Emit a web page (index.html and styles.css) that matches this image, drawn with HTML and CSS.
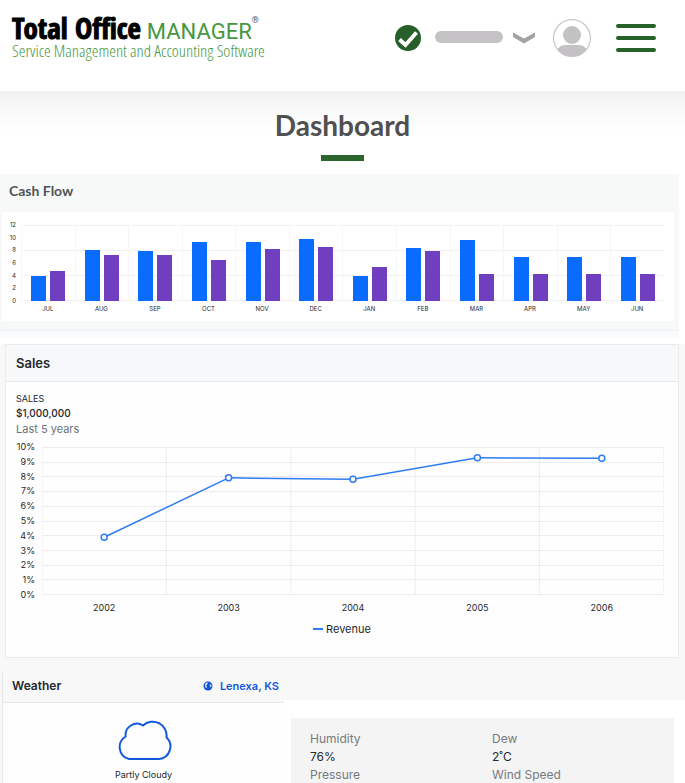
FILE: index.html
```html
<!DOCTYPE html>
<html lang="en">
<head>
<meta charset="utf-8">
<meta name="viewport" content="width=device-width, initial-scale=1">
<title>Dashboard</title>
<link rel="stylesheet" href="styles.css">
</head>
<body>
<header class="topbar">
  <a class="brand" href="#">
    <span class="brand-name"><b>Total Office</b><span class="brand-sub">MANAGER</span><sup>®</sup></span>
    <span class="tagline">Service Management and Accounting Software</span>
  </a>
  <div class="tools">
    <svg class="check" viewBox="0 0 26 26" aria-hidden="true"><circle cx="13" cy="13" r="13" fill="#265f29"/><path d="M4.500 14.500l6 5.500L21.500 7.500" fill="none" stroke="#fff" stroke-width="4"/></svg>
    <span class="pill"></span>
    <button class="icon-button" aria-label="Account menu"><svg class="chevron" viewBox="0 0 22 12"><path d="M0 .5V5l11 6.500L22 5V.5L11 6.500z" fill="#a3a3a3"/></svg></button>
    <button class="icon-button" aria-label="Profile"><svg class="avatar" viewBox="0 0 38 38"><circle cx="19" cy="19" r="18.400" fill="#fff" stroke="#c8c6c8" stroke-width="1.200"/><circle cx="19" cy="16" r="9" fill="#c3c1c3"/><path d="M4.500 30.500C7 26.500 10 26 14 26h10c4 0 7 .5 9.500 4.500A18.500 18.500 0 0 1 4.500 30.500z" fill="#c3c1c3"/></svg></button>
    <button class="icon-button" aria-label="Menu"><svg class="burger" viewBox="0 0 40 28"><path d="M2 2h36M2 14h36M2 26h36" stroke="#286229" stroke-width="4" stroke-linecap="round"/></svg></button>
  </div>
</header>
<main>
  <div class="title"><h1>Dashboard</h1></div>

  <section class="cash">
    <h2>Cash Flow</h2>
    <div class="cash-card">
      <ul class="cash-scale"><li>12</li><li>10</li><li>8</li><li>6</li><li>4</li><li>2</li><li>0</li></ul>
      <div class="cash-plot" id="cash-plot"></div>
    </div>
    <div class="cash-foot"></div>
  </section>

  <section class="sales-wrap">
    <div class="sales">
      <h2>Sales</h2>
      <div class="sales-body">
        <p class="label">SALES</p>
        <p class="amount">$1,000,000</p>
        <p class="period">Last 5 years</p>
        <div class="line-chart">
          <ul class="percent"><li>10%</li><li>9%</li><li>8%</li><li>7%</li><li>6%</li><li>5%</li><li>4%</li><li>3%</li><li>2%</li><li>1%</li><li>0%</li></ul>
          <svg id="line-plot" class="line-plot" role="img" aria-label="Revenue by year"></svg>
        </div>
        <ul class="years"><li>2002</li><li>2003</li><li>2004</li><li>2005</li><li>2006</li></ul>
        <p class="legend">Revenue</p>
      </div>
    </div>
  </section>

  <section class="weather">
    <div class="forecast">
      <div class="forecast-head">
        <h2>Weather</h2>
        <a href="#"><svg viewBox="0 0 10 10" aria-hidden="true"><circle cx="5" cy="5" r="4.500" fill="#1558d6"/><path d="M2 3l1.500-1.500 1.500.8L4 3.500l-1 .8 1 1.500-.8 1.400L2.200 6zM6.500 3.800l1.500-.3.500 1.500L7.500 6.500z" fill="#dce8fb"/></svg>Lenexa, KS</a>
      </div>
      <div class="sky">
        <svg viewBox="0 0 56 42" aria-hidden="true"><path d="M13 40A12.300 12.300 0 0 1 9.700 17.500A11.300 11.300 0 0 1 27 6.500A14 14 0 0 1 50.500 18.500A12.500 12.500 0 0 1 43 40z" fill="none" stroke="#1459dc" stroke-width="2" stroke-linejoin="round"/></svg>
        <p>Partly Cloudy</p>
      </div>
    </div>
    <div class="details">
      <dl>
        <div><dt>Humidity</dt><dd>76%</dd><dt>Pressure</dt></div>
        <div><dt>Dew</dt><dd>2˚C</dd><dt>Wind Speed</dt></div>
      </dl>
    </div>
  </section>
</main>
<script src="charts.js"></script>
</body>
</html>
```
FILE: styles.css
```css
* { box-sizing: border-box; }
body { margin: 0; background: #fff; color: #24282c; font-family: Inter, "Liberation Sans", sans-serif; }
h1, h2, p, ul, dl, dd { margin: 0; padding: 0; }
ul { list-style: none; }

.topbar { display: flex; justify-content: space-between; align-items: flex-start; height: 91px; padding: 14px 29px 0 12px; background: #fff; }
.brand { display: flex; flex-direction: column; color: #45983f; text-decoration: none; font-family: "Open Sans Condensed", "Liberation Sans Narrow", sans-serif; white-space: nowrap; }
.brand-name { display: flex; align-items: baseline; height: 27px; line-height: 28px; }
.brand-name b { color: #000; font-size: 29px; -webkit-text-stroke: 1px #000; }
.brand-sub { margin-left: 6px; font-family: Roboto, sans-serif; font-size: 22px; }
.brand-name sup { align-self: flex-start; color: #555; font-family: Roboto, sans-serif; font-size: 9px; line-height: 12px; }
.tagline { font-family: "Open Sans Condensed Light", "Open Sans Condensed", "Liberation Sans Narrow", sans-serif; font-size: 17px; font-weight: 300; line-height: 19px; }
.tools { display: flex; align-items: center; height: 48px; }
.tools svg { display: block; }
.icon-button { padding: 0; border: 0; background: none; cursor: pointer; }
.check { width: 26px; height: 26px; }
.pill { width: 68px; height: 12px; margin: 0 10px 2px 14px; border-radius: 6px; background: #c4c2c4; }
.chevron { width: 22px; height: 12px; margin-right: 18px; }
.avatar { width: 38px; height: 38px; margin-right: 25px; }
.burger { width: 40px; height: 28px; }

.title { display: flex; flex-direction: column; align-items: center; height: 83px; padding-top: 16px; background: linear-gradient(#efefef, #f8f8f8 14px, #fff 42px); }
.title h1 { color: #505050; font: 700 28px/36px Lato, sans-serif; }
.title::after { content: ""; width: 43px; height: 6px; margin-top: 12px; background: #2c652c; }

.cash { margin-right: 6px; background: #f7f9f9; }
.cash h2 { padding: 8px 9px 12px; color: #505355; font: 700 14px/18px Lato, sans-serif; }
.cash-card { display: flex; margin: 0 5px 0 2px; padding: 13px 10px 0 0; height: 109px; background: #fff; }
.cash-scale { display: flex; flex-direction: column; justify-content: space-between; width: 19px; height: 88px; padding-right: 5px; margin-top: -6px; text-align: right; font-size: 6px; line-height: 12px; }
.cash-plot { flex: 1; display: grid; grid-template-columns: repeat(12, 1fr); }
.month { text-align: center; font-size: 6px; line-height: 16px; }
.bars { display: flex; justify-content: center; align-items: flex-end; gap: 4px; height: 76px; border-left: 1px solid #f6f6f8; background: repeating-linear-gradient(to top, #f1f1f4 0 1px, transparent 1px 25px); }
.bars i { width: 15px; background: #0a6cff; }
.bars i + i { background: #6f3fbf; }
.cash-foot { height: 8px; margin-top: 9px; border-top: 1px solid #eceff3; background: #f9fafb; }

.sales-wrap { margin-top: 6px; padding: 0 6px 15px 5px; background: #f8f8f9; }
.sales { border: 1px solid #e9ebed; background: #fefefe; }
.sales h2 { padding: 8px 10px; border-bottom: 1px solid #e6e9ec; background: #f7f8fa; font-size: 13px; font-weight: 600; line-height: 20px; }
.sales-body { height: 275px; padding: 10px 10px 0; }
.label { font-size: 9px; line-height: 14px; }
.amount { font-size: 10px; font-weight: 500; line-height: 14px; }
.period { color: #6c7278; font-size: 11px; line-height: 18px; }
.line-chart { display: flex; margin: 9px 4px 0 0; }
.percent { display: flex; flex-direction: column; justify-content: space-between; width: 26px; height: 162px; padding-right: 7px; margin: -7px 0 -6px; text-align: right; font-size: 9px; line-height: 14px; }
.line-plot { flex: 1; min-width: 0; height: 149px; }
.grid-line { stroke: #ededef; }
.trend { stroke: #2f7cf0; stroke-width: 1.5px; }
.dot { fill: #fff; stroke: #2f7cf0; stroke-width: 1.5px; }
.years { display: grid; grid-template-columns: repeat(5, 1fr); margin: 5px 4px 0 26px; text-align: center; font-size: 9px; line-height: 14px; }
.legend { display: flex; justify-content: center; align-items: center; gap: 3px; margin-top: 6px; font-size: 11px; line-height: 16px; }
.legend::before { content: ""; width: 10px; height: 2px; background: #2f7cf0; }

.weather { display: grid; grid-template-columns: 284px 1fr; height: 111px; background: #f8f8f9; overflow: hidden; }
.forecast { padding-left: 2px; }
.forecast-head { display: flex; justify-content: space-between; align-items: center; height: 30px; padding: 0 5px 4px 9px; border: solid #e4e7ea; border-width: 0 0 1px 1px; }
.forecast-head h2, .forecast-head a { font-size: 11px; font-weight: 600; line-height: 16px; }
.forecast-head h2 { font-size: 12px; }
.forecast-head a { display: flex; align-items: center; gap: 7px; color: #1459dc; text-decoration: none; }
.forecast-head svg { width: 10px; height: 10px; }
.sky { height: 90px; padding-top: 16px; border-left: 1px solid #e8eaec; background: #fefefe; text-align: center; }
.sky svg { display: block; width: 56px; height: 42px; margin: 0 auto; }
.sky p { margin-top: 6px; font-size: 9px; line-height: 16px; }
.details { margin-top: 27px; padding: 18px 11px 0 7px; background: #fff; }
.details dl { display: grid; grid-template-columns: 182px 1fr; height: 90px; padding: 12px 19px; background: #f4f4f5; font-size: 12px; line-height: 18px; }
.details dt { color: #757a80; }
```
FILE: charts.js
```javascript
const cashFlow = [
  ["JUL", 4, 4.8], ["AUG", 8, 7.3], ["SEP", 7.9, 7.2], ["OCT", 9.3, 6.4],
  ["NOV", 9.3, 8.2], ["DEC", 9.8, 8.5], ["JAN", 4, 5.3], ["FEB", 8.3, 7.9],
  ["MAR", 9.6, 4.3], ["APR", 6.9, 4.3], ["MAY", 6.9, 4.3], ["JUN", 6.9, 4.3]
];
document.getElementById("cash-plot").innerHTML = cashFlow.map(([name, income, expense]) =>
  `<div class="month"><div class="bars"><i style="height:${income / 12 * 100}%"></i><i style="height:${expense / 12 * 100}%"></i></div>${name}</div>`
).join("");

const revenue = [3.93, 7.97, 7.87, 9.33, 9.3];
const plotHeight = 148;
const x = i => `${10 + i * 20}%`;
const y = v => plotHeight - v / 10 * (plotHeight - 1);
let shapes = "";
for (let i = 0; i <= 10; i++) {
  const gy = Math.round(y(i)) - 0.5;
  shapes += `<line class="grid-line" x1="0" x2="100%" y1="${gy}" y2="${gy}"/>`;
}
for (let i = 0; i <= 5; i++) {
  shapes += `<line class="grid-line" x1="${i * 20}%" x2="${i * 20}%" y1="0" y2="${plotHeight}"/>`;
}
revenue.slice(1).forEach((v, i) => {
  shapes += `<line class="trend" x1="${x(i)}" x2="${x(i + 1)}" y1="${y(revenue[i])}" y2="${y(v)}"/>`;
});
revenue.forEach((v, i) => {
  shapes += `<circle class="dot" cx="${x(i)}" cy="${y(v)}" r="3"/>`;
});
document.getElementById("line-plot").innerHTML = shapes;
```
